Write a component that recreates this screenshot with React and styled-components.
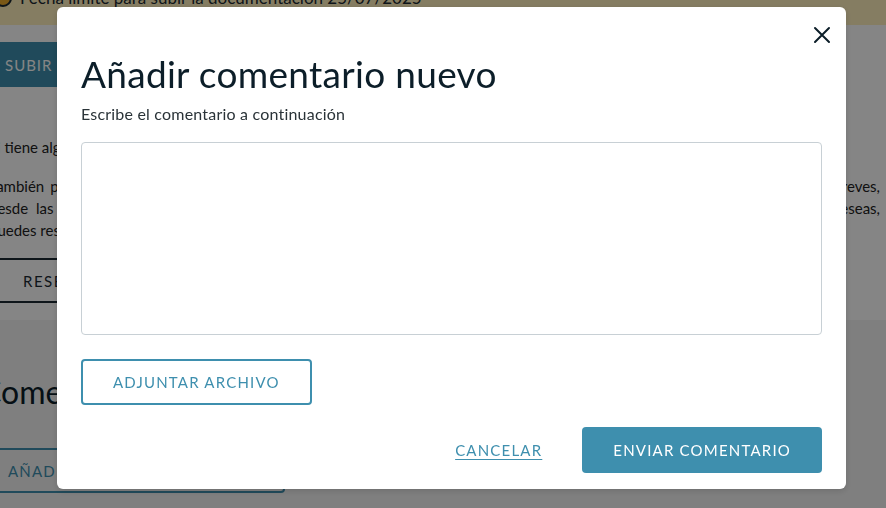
import React from 'react';
import styled, { createGlobalStyle } from 'styled-components';

const GlobalStyle = createGlobalStyle`
  * { box-sizing: border-box; }
  html, body {
    margin: 0;
    padding: 0;
    width: 886px;
    height: 508px;
    overflow: hidden;
    font-family: Lato, "Open Sans", sans-serif;
    color: #0c1e29;
  }
`;

const teal = '#3e8fae';

const Page = styled.div`
  width: 886px;
  height: 508px;
  overflow: hidden;
  background: #ffffff;
  display: flex;
  flex-direction: column;
`;

const Banner = styled.div`
  height: 25px;
  background: #fff0bd;
  overflow: hidden;
  font-size: 17px;
  color: #1b2a33;
`;

const BannerInner = styled.div`
  display: flex;
  align-items: center;
  gap: 8px;
  margin-top: -13px;
  margin-left: -6px;
`;

const WarnDot = styled.span`
  width: 18px;
  height: 18px;
  border-radius: 50%;
  background: #e8a92c;
  border: 2px solid #1b2a33;
`;

const Upper = styled.section`
  display: flex;
  flex-direction: column;
  align-items: flex-start;
  margin-left: -11px;
  padding: 17px 6px 0 0;
  height: 295px;
`;

const SolidButton = styled.button`
  height: 45px;
  padding: 0 22px 0 16px;
  border: none;
  border-radius: 4px;
  background: ${teal};
  color: #ffffff;
  font-family: Lato, sans-serif;
  font-size: 15px;
  letter-spacing: 1px;
  text-transform: uppercase;
`;

const Para = styled.div`
  margin-top: ${p => p.$top || 0}px;
  width: 891px;
  font-size: 15px;
  line-height: 22px;
  color: #222;
`;

const Line = styled.span`
  display: block;
  overflow: hidden;
  height: 22px;
  text-align: ${p => (p.$justify ? 'justify' : 'left')};
  text-align-last: ${p => (p.$justify ? 'justify' : 'left')};
  white-space: ${p => (p.$justify ? 'normal' : 'nowrap')};
`;

const DarkOutline = styled.button`
  margin-top: 17px;
  margin-left: -10px;
  height: 45px;
  width: 240px;
  border: 2px solid #1b2a33;
  border-left: none;
  border-right: none;
  background: transparent;
  color: #1b2a33;
  font-family: Lato, sans-serif;
  font-size: 15px;
  letter-spacing: 1.5px;
  padding-left: 44px;
  text-align: left;
`;

const Lower = styled.section`
  flex: 1;
  background: #f4f4f4;
  display: flex;
  flex-direction: column;
  align-items: flex-start;
  padding-top: 52px;
  margin-left: -20px;
`;

const SectionHeading = styled.h2`
  margin: 0;
  font-size: 32px;
  font-weight: 400;
  color: #0c1e29;
`;

const OutlineButton = styled.button`
  height: ${p => p.$h || 46}px;
  margin-top: ${p => p.$top || 0}px;
  padding: 0 ${p => p.$pad || 30}px;
  width: ${p => (p.$w ? `${p.$w}px` : 'auto')};
  border: 2px solid ${teal};
  border-radius: 4px;
  background: ${p => (p.$ghost ? 'transparent' : '#ffffff')};
  color: ${teal};
  font-family: Lato, sans-serif;
  font-size: 15px;
  letter-spacing: 1.2px;
  text-transform: uppercase;
  text-align: ${p => p.$align || 'center'};
`;

const Overlay = styled.div`
  position: fixed;
  inset: 0;
  background: rgba(0, 0, 0, 0.48);
  display: flex;
  align-items: flex-start;
  padding: 7px 0 0 57px;
`;

const Modal = styled.div`
  position: relative;
  width: 789px;
  height: 482px;
  background: #ffffff;
  border-radius: 6px;
  box-shadow: 0 2px 6px rgba(0, 0, 0, 0.15);
  padding: 45px 24px 16px;
  display: flex;
  flex-direction: column;
  align-items: flex-start;
`;

const CloseButton = styled.button`
  position: absolute;
  top: 12px;
  right: 8px;
  width: 32px;
  height: 32px;
  padding: 0;
  border: none;
  background: transparent;
  display: flex;
  align-items: center;
  justify-content: center;
  cursor: pointer;
`;

const Title = styled.h1`
  margin: 0;
  font-size: 37px;
  line-height: 43px;
  letter-spacing: 0.3px;
  font-weight: 400;
  color: #0c1e29;
`;

const Subtitle = styled.p`
  margin: 9px 0 0;
  font-size: 16px;
  line-height: 19px;
  letter-spacing: 0.2px;
  color: #2a3338;
`;

const TextArea = styled.textarea`
  margin-top: 19px;
  width: 100%;
  height: 193px;
  border: 1px solid #c8d0d5;
  border-radius: 4px;
  resize: none;
  padding: 12px;
  font-family: Lato, sans-serif;
  font-size: 15px;
  outline: none;
`;

const Footer = styled.div`
  margin-top: 22px;
  width: 100%;
  display: flex;
  justify-content: flex-end;
  align-items: center;
  gap: 40px;
`;

const LinkButton = styled.button`
  border: none;
  background: transparent;
  padding: 0;
  color: ${teal};
  font-family: Lato, sans-serif;
  font-size: 15px;
  letter-spacing: 1.2px;
  text-decoration: underline;
  text-underline-offset: 3px;
  cursor: pointer;
`;

const PrimaryButton = styled.button`
  height: 46px;
  padding: 0 31px;
  border: none;
  border-radius: 4px;
  background: ${teal};
  color: #ffffff;
  font-family: Lato, sans-serif;
  font-size: 15px;
  letter-spacing: 1.2px;
  cursor: pointer;
`;

const CloseIcon = () => (
  <svg width="18" height="18" viewBox="0 0 18 18" fill="none">
    <path d="M2 2L16 16M16 2L2 16" stroke="#0c1e29" strokeWidth="2" strokeLinecap="round" />
  </svg>
);

export default function App() {
  return (
    <>
      <GlobalStyle />
      <Page>
        <Banner>
          <BannerInner>
            <WarnDot />
            <span>Fecha límite para subir la documentación 25/07/2025</span>
          </BannerInner>
        </Banner>
        <Upper>
          <SolidButton>Subir documentación</SolidButton>
          <Para $top={49}>
            <Line>Si tiene alguna duda sobre la documentación, contacta con nosotros.</Line>
          </Para>
          <Para $top={17}>
            <Line $justify>
              También puedes añadir comentarios a tu solicitud si lo necesitas para aclarar cualquier cosa. Los comentarios son mensajes breves,
            </Line>
            <Line $justify>
              desde las que puedes explicar cualquier detalle de tu documentación a la persona que gestiona tu expediente y, si lo deseas,
            </Line>
            <Line>puedes responder a los comentarios recibidos.</Line>
          </Para>
          <DarkOutline>RESERVAR CITA</DarkOutline>
        </Upper>
        <Lower>
          <SectionHeading>Comentarios</SectionHeading>
          <OutlineButton $top={37} $h={45} $w={305} $align="left" $pad={26} $ghost>
            Añadir comentario
          </OutlineButton>
        </Lower>
      </Page>
      <Overlay>
        <Modal>
          <CloseButton aria-label="Cerrar">
            <CloseIcon />
          </CloseButton>
          <Title>Añadir comentario nuevo</Title>
          <Subtitle>Escribe el comentario a continuación</Subtitle>
          <TextArea />
          <OutlineButton $top={24}>Adjuntar archivo</OutlineButton>
          <Footer>
            <LinkButton>CANCELAR</LinkButton>
            <PrimaryButton>ENVIAR COMENTARIO</PrimaryButton>
          </Footer>
        </Modal>
      </Overlay>
    </>
  );
}
